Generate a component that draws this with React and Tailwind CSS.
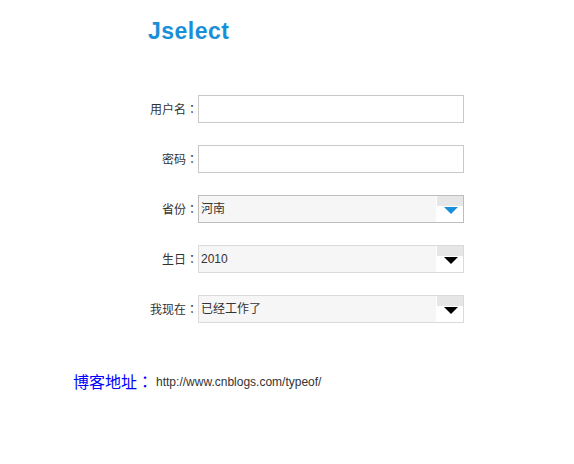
import React from "react";

const cjk = { fontFamily: '"Liberation Sans", Arial, "Noto Sans CJK SC", sans-serif' };
const colonFont = { fontFamily: '"Noto Sans CJK TC", "Noto Sans CJK SC", sans-serif' };

function Colon() {
  return <span style={colonFont}>：</span>;
}

function Arrow({ color }) {
  return (
    <div className="flex w-[27px] self-stretch flex-col border-l border-white">
      <div className="h-[10px] bg-[#e6e6e6]"></div>
      <div className="flex flex-1 justify-center bg-white pt-px">
        <svg width="14" height="7" viewBox="0 0 14 7" className="ml-[1px]">
          <polygon points="0,0 14,0 7,7" fill={color} />
        </svg>
      </div>
    </div>
  );
}

function Row({ label, children }) {
  return (
    <div className="flex h-[28px] items-center">
      <div className="w-[198px] text-right text-[12px] text-[#333]">
        {label}
        <Colon />
      </div>
      {children}
    </div>
  );
}

function Input() {
  return <div className="h-[28px] w-[266px] border border-[#c9c9c9] bg-white"></div>;
}

function Select({ value, border, color }) {
  return (
    <div className={`flex h-[28px] w-[266px] border ${border} bg-[#f6f6f6]`}>
      <div className="flex flex-1 items-center pl-[2px] text-[12px] text-[#333]">{value}</div>
      <Arrow color={color} />
    </div>
  );
}

export default function App() {
  return (
    <div className="h-[464px] w-[574px] bg-white" style={cjk}>
      <div className="pl-[148px] pt-[18px] text-[23px] font-bold leading-[26px] tracking-[0.5px] text-[#1a8fd9]">
        Jselect
      </div>
      <div className="mt-[51px] flex flex-col gap-[22px]">
        <Row label="用户名">
          <Input />
        </Row>
        <Row label="密码">
          <Input />
        </Row>
        <Row label="省份">
          <Select value="河南" border="border-[#bdbdbd]" color="#1a8fd9" />
        </Row>
        <Row label="生日">
          <Select value="2010" border="border-[#dadada]" color="#000" />
        </Row>
        <Row label="我现在">
          <Select value="已经工作了" border="border-[#dadada]" color="#000" />
        </Row>
      </div>
      <div className="mt-[46px] flex items-center pl-[73px]">
        <span className="text-[16px] text-[#0000ff]">
          博客地址
          <Colon />
        </span>
        <span className="ml-[3px] text-[12px] text-[#333]">http://www.cnblogs.com/typeof/</span>
      </div>
    </div>
  );
}
